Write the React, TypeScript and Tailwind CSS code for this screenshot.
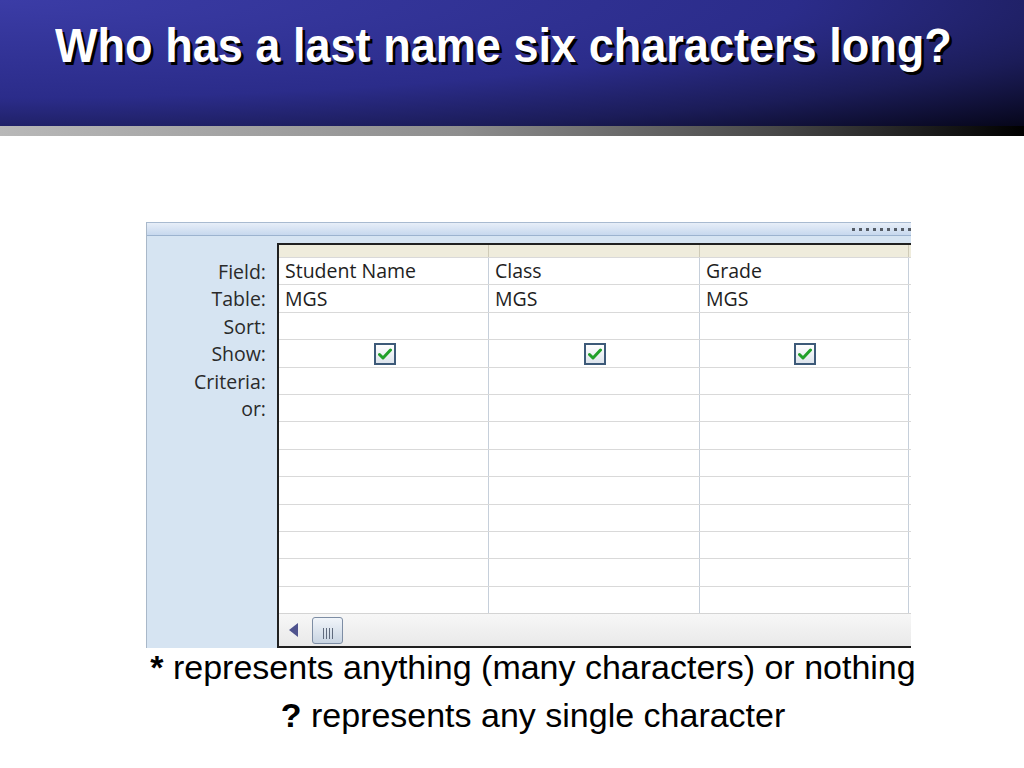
import React from "react";

const labels = ["Field:", "Table:", "Sort:", "Show:", "Criteria:", "or:"];
const columns = [
  { field: "Student Name", table: "MGS", w: "w-[210px]" },
  { field: "Class", table: "MGS", w: "w-[211px]" },
  { field: "Grade", table: "MGS", w: "w-[209px]" },
];
const ROWS = 13;

const CheckBox: React.FC = () => (
  <div className="w-[22px] h-[22px] border-2 border-[#3d5a79] bg-[linear-gradient(180deg,#ffffff,#dde4ec)] flex items-center justify-center">
    <svg width="14" height="12" viewBox="0 0 14 12">
      <path d="M1.5 6.5 L5 10 L12.5 2" fill="none" stroke="#21a02a" strokeWidth="3" strokeLinecap="round" strokeLinejoin="round" />
    </svg>
  </div>
);

const App: React.FC = () => {
  return (
    <div className="w-[1024px] h-[768px] bg-white overflow-hidden font-['Liberation_Sans',Arial,sans-serif]">
      {/* Title band */}
      <div className="h-[126px] pl-[55px] pt-[17px] bg-[radial-gradient(ellipse_at_top_left,#3b3ca6_0%,#2b2c8a_55%,#1b1c58_78%,#06061a_100%)]">
        <h1 className="inline-block origin-left scale-x-[0.92] whitespace-nowrap text-[49px] leading-[56px] font-bold text-white [text-shadow:3px_3px_0_#000]">
          Who has a last name six characters long?
        </h1>
      </div>
      <div className="h-[10px] bg-[linear-gradient(90deg,#b8b8b8_0%,#8e8e8e_45%,#4a4a4a_75%,#000000_100%)]" />

      {/* Query design grid screenshot */}
      <div className="pt-[86px] pl-[146px]">
        <div className="w-[765px] h-[426px] flex flex-col border-l border-[#a9b8c9] bg-[#d6e4f2] font-['Open_Sans',sans-serif]">
          <div className="h-[14px] border-t border-b border-t-[#a8bad0] border-b-[#9cb3cf] bg-[linear-gradient(180deg,#e7eef8,#c7d8ee)] flex items-center justify-end">
            <div className="flex gap-[4px]">
              {Array.from({ length: 9 }).map((_, i) => (
                <span key={i} className="w-[3px] h-[3px] bg-[#555c66]" />
              ))}
            </div>
          </div>

          <div className="flex flex-1">
            {/* Row labels */}
            <div className="w-[130px] pt-[22px] pr-[11px] flex flex-col items-end text-[19.5px] text-[#2a2a2a]">
              {labels.map((l) => (
                <div key={l} className="h-[27.4px] leading-[27px]">
                  {l}
                </div>
              ))}
            </div>

            {/* Grid */}
            <div className="flex-1 mt-[7px] border-l-2 border-t-2 border-b-2 border-[#202020] bg-white flex flex-col">
              <div className="flex h-[12px] bg-[#efecdc]">
                {columns.map((c) => (
                  <div key={c.field} className={`${c.w} border-r border-[#cfcbb8]`} />
                ))}
              </div>
              {Array.from({ length: ROWS }).map((_, r) => (
                <div key={r} className="flex h-[27.4px] border-t border-[#d9d9d9]">
                  {columns.map((c) => (
                    <div
                      key={c.field}
                      className={`${c.w} border-r border-[#c6cfda] pl-[6px] text-[19.5px] leading-[26px] text-[#1e1e1e] flex items-center`}
                    >
                      {r === 0 && c.field}
                      {r === 1 && c.table}
                      {r === 3 && (
                        <div className="w-full flex justify-center pr-[4px] pt-[1px]">
                          <CheckBox />
                        </div>
                      )}
                    </div>
                  ))}
                </div>
              ))}
              {/* Horizontal scroll bar */}
              <div className="flex-1 border-t border-[#d4d4d4] bg-[linear-gradient(180deg,#f7f7f7,#e9e9e9)] flex items-center pl-[10px] gap-[14px]">
                <svg width="9" height="14" viewBox="0 0 9 14">
                  <path d="M9 0 L0 7 L9 14 Z" fill="#4f538e" />
                </svg>
                <div className="w-[31px] h-[27px] rounded-[3px] border border-[#7d8da4] bg-[linear-gradient(180deg,#f1f5fa,#c8d4e2)] flex items-center justify-center gap-[2px] pt-[6px]">
                  {Array.from({ length: 4 }).map((_, i) => (
                    <span key={i} className="w-[1px] h-[11px] bg-[#5f6a7d]" />
                  ))}
                </div>
              </div>
            </div>
          </div>
        </div>
      </div>

      {/* Captions */}
      <div className="pl-[42px] text-center text-[34px] leading-[38px] text-black">
        <p className="whitespace-nowrap">
          <span className="font-bold">*</span> represents anything (many characters) or nothing
        </p>
        <p className="whitespace-nowrap mt-[10px]">
          <span className="font-bold">?</span> represents any single character
        </p>
      </div>
    </div>
  );
};

export default App;
